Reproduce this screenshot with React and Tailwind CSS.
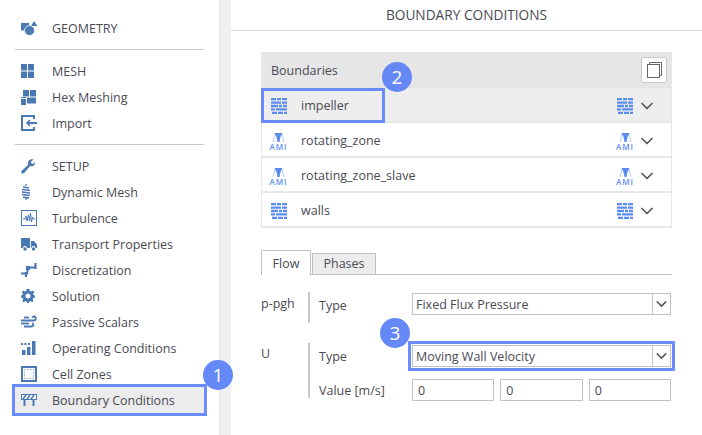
import React from 'react';
import { ChevronDown } from 'lucide-react';

const BLUE = '#4a78b4';

const GeometryIcon = () => (
  <svg width="17" height="15" viewBox="0 0 17 15" fill={BLUE}>
    <rect x="0" y="2" width="8" height="7.5" />
    <path d="M13 0 L16.5 5 H10 Z" />
    <circle cx="8.5" cy="9.5" r="5" stroke="#fff" strokeWidth="0.8" />
  </svg>
);
const MeshIcon = () => (
  <svg width="13" height="14" viewBox="0 0 13 14" fill={BLUE}>
    <rect x="0" y="0" width="6" height="6.5" />
    <rect x="7" y="0" width="6" height="6.5" />
    <rect x="0" y="7.5" width="6" height="6.5" />
    <rect x="7" y="7.5" width="6" height="6.5" />
  </svg>
);
const HexIcon = () => (
  <svg width="15" height="15" viewBox="0 0 15 15" fill={BLUE}>
    <rect x="2" y="0" width="6" height="6.5" />
    <rect x="9" y="0" width="6" height="6.5" />
    <rect x="6" y="7.5" width="9" height="6" />
    <rect x="0" y="9" width="5" height="6" />
    <rect x="0" y="7" width="5" height="1" />
  </svg>
);
const ImportIcon = () => (
  <svg width="16" height="16" viewBox="0 0 16 16" fill="none" stroke={BLUE}>
    <path d="M13 4 V1 H1 V15 H13 V12" strokeWidth="2" />
    <path d="M16 8 H7" strokeWidth="2" />
    <path d="M9 5 L6 8 L9 11" strokeWidth="1.5" />
  </svg>
);
const WrenchIcon = () => (
  <svg width="14" height="15" viewBox="0 0 14 15" fill={BLUE}>
    <path d="M9.5 0.5 C11 0 12 0.2 12.4 0.5 L9.8 3 L10.6 4.6 L12.4 5 L14 2.8 C14.4 5 13.2 7.2 10.6 7.2 C10 7.2 9.6 7.1 9.2 7 L3.4 13.8 C2.6 14.8 1.2 14.8 0.6 14.2 C0 13.4 0.1 12.2 1 11.5 L7 6 C6.4 3.4 7.6 1.2 9.5 0.5 Z" />
  </svg>
);
const SpringIcon = () => (
  <svg width="10" height="16" viewBox="0 0 10 16" fill="none" stroke={BLUE} strokeWidth="1.3">
    <path d="M5 0 V2 M2 3 L8 4 M1 5.5 L9 6.5 M1 8 L9 9 M1 10.5 L9 11.5 M2 13 L8 14 M5 14 V16" />
  </svg>
);
const TurbulenceIcon = () => (
  <svg width="16" height="16" viewBox="0 0 16 16" fill="none" stroke={BLUE}>
    <rect x="0.5" y="0.5" width="15" height="15" />
    <path d="M2 9 L4 9 L5 6 L6 11 L7.5 5 L8.5 11 L9.5 3 L10.5 12 L11.5 7 L12.5 9 H14" strokeWidth="1" />
  </svg>
);
const TruckIcon = () => (
  <svg width="16" height="13" viewBox="0 0 16 13" fill={BLUE}>
    <path d="M0 1 Q0 0 1 0 H9 V10 H6 A2 2 0 0 0 2 10 H0 Z" />
    <path d="M10 3 H13 L16 6.5 V10 H14.5 A2 2 0 0 0 10.5 10 H10 Z" />
    <circle cx="4" cy="11" r="1.7" />
    <circle cx="12.5" cy="11" r="1.7" />
  </svg>
);
const DiscretizationIcon = () => (
  <svg width="16" height="14" viewBox="0 0 16 14" fill="none" stroke={BLUE} strokeWidth="2">
    <path d="M0 10.5 H6 L7 4.5 H15" />
    <path d="M14.5 0 V6 M5 9 V14" strokeWidth="2.2" />
    <rect x="5.5" y="3.5" width="3" height="3" fill={BLUE} strokeWidth="1" />
  </svg>
);
const GearIcon = () => (
  <svg width="14" height="14" viewBox="0 0 14 14" fill={BLUE}>
    <path fillRule="evenodd" d="M5.6 0 H8.4 L8.8 1.9 L10.3 2.6 L12 1.6 L13.4 3.4 L12 4.8 L12.4 6 L14 6.6 V8.6 L12.3 9 L11.7 10.4 L12.6 12 L11 13.2 L9.6 12.1 L8.4 12.5 L8 14 H6 L5.6 12.5 L4.2 12 L2.8 13.2 L1.2 12 L2.2 10.4 L1.6 9 L0 8.6 V6.6 L1.6 6 L2 4.8 L0.8 3.4 L2 1.6 L3.7 2.6 L5.2 1.9 Z M7 4.6 A2.5 2.5 0 1 0 7 9.6 A2.5 2.5 0 1 0 7 4.6 Z" />
  </svg>
);
const WindIcon = () => (
  <svg width="16" height="14" viewBox="0 0 16 14" fill="none" stroke={BLUE} strokeWidth="1.8">
    <path d="M3 2.5 H8" />
    <path d="M0 5.5 H12.5 C15.5 5.5 15.5 1.5 13 1.5 C12 1.5 11.4 2 11.2 2.6" />
    <path d="M0 8.5 H8" />
    <path d="M3 11.5 H10.5 C13 11.5 13 8.5 11 8.5" />
  </svg>
);
const BarsIcon = () => (
  <svg width="15" height="14" viewBox="0 0 15 14" fill={BLUE}>
    <rect x="1" y="9" width="3.5" height="5" />
    <rect x="6" y="6" width="3.5" height="8" />
    <rect x="11" y="0" width="3.5" height="14" />
    <rect x="0" y="2" width="2" height="2" />
    <rect x="3.5" y="2" width="2" height="2" />
    <rect x="7" y="2" width="2" height="2" />
  </svg>
);
const ZonesIcon = () => (
  <svg width="16" height="16" viewBox="0 0 16 16" fill="none" stroke={BLUE}>
    <rect x="1" y="1" width="14" height="14" strokeWidth="2" />
    <rect x="3.5" y="3.5" width="9" height="9" strokeWidth="1" strokeDasharray="1 2" />
  </svg>
);
const BarrierIcon = () => (
  <svg width="16" height="12" viewBox="0 0 16 12" fill="none">
    <rect x="0.5" y="0.5" width="15" height="5" stroke={BLUE} fill="#fff" />
    <path d="M2 5 L5 1 M6 5 L9 1 M10 5 L13 1" stroke={BLUE} strokeWidth="1.6" />
    <path d="M3.5 6 V12 M12.5 6 V12" stroke={BLUE} strokeWidth="2" />
  </svg>
);

const WallIcon = () => (
  <svg width="16" height="16" viewBox="0 0 16 14" preserveAspectRatio="none" fill="#5b8def">
    <path d="M0 0 H5 V2 H0 Z M6 0 H10 V2 H6 Z M11 0 H16 V2 H11 Z" />
    <path d="M0 3 H10 V5 H0 Z M11 3 H16 V5 H11 Z" />
    <path d="M0 6 H7 V8 H0 Z M8 6 H11 V8 H8 Z M12 6 H16 V8 H12 Z" />
    <path d="M0 9 H4 V11 H0 Z M5 9 H16 V11 H5 Z" />
    <path d="M1 12 H6 V14 H1 Z M7 12 H12 V14 H7 Z M13 12 H16 V14 H13 Z" />
  </svg>
);
const AmiIcon = () => (
  <div className="flex flex-col items-center w-[15px] h-[17px]">
    <svg width="15" height="10" viewBox="0 0 15 10">
      <path d="M4 1 L2 9 M11 1 L13 9" stroke="#b8cdf5" strokeWidth="1" />
      <path d="M3.5 0 H11.5 L9.5 4 L8.5 9 H6.5 L5.5 4 Z" fill="#5b8def" />
    </svg>
    <span className="text-[8px] leading-[7px] font-semibold text-[#5b8def] tracking-[1px]">AMI</span>
  </div>
);

const Badge = ({ n, className }) => (
  <div className={`absolute z-10 w-[30px] h-[30px] rounded-full bg-[#6488f5] text-white flex items-center justify-center text-[19px] ${className}`}>
    {n}
  </div>
);

const NavRow = ({ icon, label, active }) => (
  <div className="relative h-[26px] flex items-center text-[12.5px] text-[#4a4a55]">
    <div className="relative z-[1] w-[52px] pl-[21px] flex items-center">{icon}</div>
    <span className="relative z-[1] pt-[2px]">{label}</span>
    {active && <div className="absolute left-[12px] w-[195px] h-[32px] -top-[3px] border-[3px] border-[#6a8cff] bg-[#ececec]" />}
  </div>
);

const Divider = () => <div className="h-px bg-[#c8c8c8] mx-[15px] my-[8px] w-[189px]" />;

const BoundaryRow = ({ icon, name, active }) => (
  <div className={`relative h-[35px] pt-[3px] flex items-center border-b-2 border-[#e8e8e8] text-[12.5px] text-[#4a4a55] ${active ? 'bg-[#eeeeee]' : 'bg-white'}`}>
    {active && <div className="absolute -left-px top-0 w-[124px] h-[35px] border-[3px] border-[#6a8cff]" />}
    <div className="w-[39px] pl-[9px] flex items-center">{icon}</div>
    <span>{name}</span>
    <div className="ml-auto w-[16px] flex justify-center">{icon}</div>
    <ChevronDown className="w-[20px] h-[20px] ml-[4px] mr-[14px] text-[#555]" strokeWidth={2} />
  </div>
);

const SelectBox = ({ value }) => (
  <div className="w-[259px] h-[22px] border border-[#c2c2c2] bg-white flex items-center text-[12.5px] text-[#4a4a55]">
    <span className="flex-1 pl-[3px] pt-[2px]">{value}</span>
    <div className="w-[18px] h-full border-l border-[#c2c2c2] flex items-center justify-center">
      <ChevronDown className="w-[18px] h-[18px] text-[#555]" strokeWidth={2} />
    </div>
  </div>
);

const NumBox = () => (
  <div className="flex-1 h-[22px] border border-[#c2c2c2] bg-white flex items-center pl-[5px] pt-[2px] text-[12.5px] text-[#4a4a55]">0</div>
);

const App = () => (
  <div className="relative w-[702px] h-[435px] flex bg-white overflow-hidden font-['Open_Sans',sans-serif]">
    <aside className="w-[220px] border-r border-[#e4e4e4] pt-[15px]">
      <NavRow icon={<GeometryIcon />} label="GEOMETRY" />
      <Divider />
      <NavRow icon={<MeshIcon />} label="MESH" />
      <NavRow icon={<HexIcon />} label="Hex Meshing" />
      <NavRow icon={<ImportIcon />} label="Import" />
      <Divider />
      <NavRow icon={<WrenchIcon />} label="SETUP" />
      <NavRow icon={<SpringIcon />} label="Dynamic Mesh" />
      <NavRow icon={<TurbulenceIcon />} label="Turbulence" />
      <NavRow icon={<TruckIcon />} label="Transport Properties" />
      <NavRow icon={<DiscretizationIcon />} label="Discretization" />
      <NavRow icon={<GearIcon />} label="Solution" />
      <NavRow icon={<WindIcon />} label="Passive Scalars" />
      <NavRow icon={<BarsIcon />} label="Operating Conditions" />
      <NavRow icon={<ZonesIcon />} label="Cell Zones" />
      <NavRow icon={<BarrierIcon />} label="Boundary Conditions" active />
    </aside>
    <div className="w-[11px] bg-[#f0f0f0]" />
    <main className="flex-1 flex flex-col">
      <header className="h-[31px] border-b border-[#dcdcdc] flex items-center justify-center text-[13.7px] text-[#4a4a55]">
        BOUNDARY CONDITIONS
      </header>

      <div className="px-[30px] pt-[21px]">
        <div className="border-x border-[#e8e8e8]">
          <div className="h-[36px] bg-[#e6e6e6] flex items-center justify-between pl-[9px] pr-[4px] text-[12.5px] text-[#4a4a55]">
            <span className="pt-[2px]">Boundaries</span>
            <div className="w-[26px] h-[26px] bg-white border border-[#c8c8c8] rounded-[3px] flex items-center justify-center">
              <svg width="15" height="16" viewBox="0 0 15 16" fill="none" stroke="#666" strokeWidth="1">
                <rect x="0.5" y="2.5" width="12" height="13" />
                <path d="M2.5 2.5 V0.5 H14.5 V13.5 H12.5" />
              </svg>
            </div>
          </div>
          <BoundaryRow icon={<WallIcon />} name="impeller" active />
          <BoundaryRow icon={<AmiIcon />} name="rotating_zone" />
          <BoundaryRow icon={<AmiIcon />} name="rotating_zone_slave" />
          <BoundaryRow icon={<WallIcon />} name="walls" />
        </div>

        <div className="mt-[22px] flex items-end h-[25px] border-b border-[#c2c2c2] text-[12.5px] text-[#4a4a55]">
          <div className="w-[50px] h-[25px] pt-[2px] border border-b-0 border-[#c2c2c2] bg-white flex items-center justify-center -mb-px">Flow</div>
          <div className="w-[64px] h-[21px] pt-[1px] ml-px border border-b-0 border-[#c2c2c2] bg-[#ececec] flex items-center justify-center">Phases</div>
        </div>

        <div className="mt-[17px] flex text-[12.5px] text-[#4a4a55]">
          <div className="w-[47px] pt-[3px]">p-pgh</div>
          <div className="w-[2px] h-[31px] bg-[#c8c8c8]" />
          <div className="pl-[9px] w-[102px] pt-[5px]">Type</div>
          <div className="pt-[1px]"><SelectBox value="Fixed Flux Pressure" /></div>
        </div>

        <div className="mt-[20px] flex text-[12.5px] text-[#4a4a55]">
          <div className="w-[47px] pt-[2px]">U</div>
          <div className="w-[2px] h-[55px] bg-[#c8c8c8]" />
          <div className="flex flex-col gap-[12px] pt-[2px]">
            <div className="flex items-center">
              <div className="pl-[9px] w-[102px] pt-[3px]">Type</div>
              <div className="relative">
                <SelectBox value="Moving Wall Velocity" />
                <div className="absolute -left-[4px] -top-[4px] w-[267px] h-[30px] border-[3px] border-[#6a8cff]" />
              </div>
            </div>
            <div className="flex items-center">
              <div className="pl-[9px] w-[102px] pt-[2px]">Value [m/s]</div>
              <div className="w-[259px] flex gap-[6px]">
                <NumBox />
                <NumBox />
                <NumBox />
              </div>
            </div>
          </div>
        </div>
      </div>
    </main>

    <Badge n="1" className="left-[203px] top-[360px]" />
    <Badge n="2" className="left-[382px] top-[62px]" />
    <Badge n="3" className="left-[380px] top-[318px]" />
  </div>
);

export default App;
